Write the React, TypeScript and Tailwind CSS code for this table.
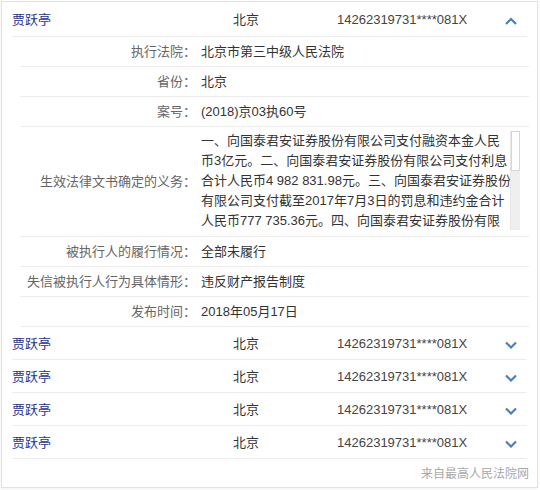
import React from "react";

const FONT = { fontFamily: '"Liberation Sans", "Noto Sans CJK SC", sans-serif' };

function Chevron({ up }: { up?: boolean }) {
  return (
    <svg width="12" height="8" viewBox="0 0 12 8" className="block">
      <path
        d={up ? "M1 7 L6 2 L11 7" : "M1 1.5 L6 6.5 L11 1.5"}
        fill="none"
        stroke="#4a7fc0"
        strokeWidth="2.2"
        strokeLinejoin="miter"
      />
    </svg>
  );
}

function HeadRow({ up, h }: { up?: boolean; h: string }) {
  return (
    <div className={`flex items-center mx-[10px] border-b border-[#ececec] text-[13px] leading-none ${h}`}>
      <div className="w-[221px] text-[#27308a]">贾跃亭</div>
      <div className="w-[104px] text-[#333]">北京</div>
      <div className="w-[168px] text-[#444]">14262319731****081X</div>
      <div className={up ? "pt-[3px]" : "pt-[3px]"}>
        <Chevron up={up} />
      </div>
    </div>
  );
}

function Detail({ label, children, h = "h-[30px]", items = "items-center" }: { label: string; children: React.ReactNode; h?: string; items?: string }) {
  return (
    <div className={`flex ${items} ml-[18px] mr-[8px] border-b border-[#ececec] text-[13px] leading-none ${h}`}>
      <div className="w-[176px] text-right text-[#666] whitespace-nowrap">{label}：</div>
      <div className="pl-[5px] text-[#333]">{children}</div>
    </div>
  );
}

export default function App() {
  const lines = [
    "一、向国泰君安证券股份有限公司支付融资本金人民",
    "币3亿元。二、向国泰君安证券股份有限公司支付利息",
    "合计人民币4 982 831.98元。三、向国泰君安证券股份",
    "有限公司支付截至2017年7月3日的罚息和违约金合计",
    "人民币777 735.36元。四、向国泰君安证券股份有限",
  ];
  return (
    <div className="w-[540px] h-[490px] bg-white pt-px pl-px" style={FONT}>
      <div className="w-[537px] h-[487px] border border-[#e2e2e2] bg-white shadow-[0_1px_2px_rgba(0,0,0,0.06)] flex flex-col">
        <HeadRow up h="h-[35px]" />
        <Detail label="执行法院">北京市第三中级人民法院</Detail>
        <Detail label="省份">北京</Detail>
        <Detail label="案号">(2018)京03执60号</Detail>
        <div className="flex items-center ml-[18px] mr-[8px] border-b border-[#ececec] text-[13px] h-[110px]">
          <div className="w-[176px] text-right text-[#666] whitespace-nowrap leading-none">生效法律文书确定的义务：</div>
          <div className="pl-[5px] flex h-[100px] -mt-[2px]">
            <div className="w-[309px] h-[100px] overflow-hidden text-[#333] leading-[20px]">
              {lines.map((l, i) => (
                <div key={i} className="whitespace-nowrap">{l}</div>
              ))}
            </div>
            <div className="w-[10px] h-[99px] bg-[#efefef] border-l border-[#e6e6e6]">
              <div className="h-[40px] bg-white border border-[#d6d6d6]" />
            </div>
          </div>
        </div>
        <Detail label="被执行人的履行情况">全部未履行</Detail>
        <Detail label="失信被执行人行为具体情形">违反财产报告制度</Detail>
        <Detail label="发布时间">2018年05月17日</Detail>
        <HeadRow h="h-[33px]" />
        <HeadRow h="h-[33px]" />
        <HeadRow h="h-[33px]" />
        <HeadRow h="h-[33px]" />
        <div className="flex-1 flex items-center justify-end pr-[8px] text-[12px] text-[#a8a8a8] leading-none pt-[1px]">
          来自最高人民法院网
        </div>
      </div>
    </div>
  );
}
